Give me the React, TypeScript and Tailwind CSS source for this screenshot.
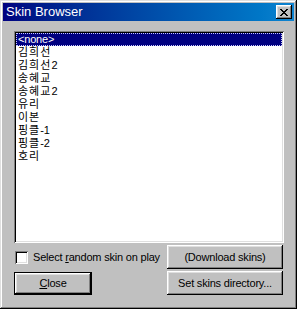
const skins = [
  "<none>",
  "김희선",
  "김희선2",
  "송혜교",
  "송혜교2",
  "유리",
  "이본",
  "핑클-1",
  "핑클-2",
  "호리",
];

const raised =
  "shadow-[inset_-1px_-1px_#000000,inset_1px_1px_#ffffff,inset_-2px_-2px_#808080,inset_2px_2px_#dfdfdf]";
const sunken =
  "shadow-[inset_1px_1px_#808080,inset_-1px_-1px_#ffffff,inset_2px_2px_#000000,inset_-2px_-2px_#dfdfdf]";

// hangul runs get wider spacing, like the bitmap Gulim in the original
function SkinName({ name }: { name: string }) {
  const parts = name.split(/([\uAC00-\uD7A3]+)/).filter(Boolean);
  return (
    <>
      {parts.map((p, i) =>
        /[\uAC00-\uD7A3]/.test(p) ? (
          <span key={i} className="tracking-[1px]">
            {p}
          </span>
        ) : (
          <span key={i}>{p}</span>
        )
      )}
    </>
  );
}

function App() {
  return (
    <div
      className="h-[309px] w-[297px] bg-[#c0c0c0] p-[3px] text-[11px] tracking-[-0.2px] text-black shadow-[inset_-1px_-1px_#000000,inset_1px_1px_#dfdfdf,inset_-2px_-2px_#808080,inset_2px_2px_#ffffff]"
      style={{ fontFamily: '"Liberation Sans", "Noto Sans CJK KR", sans-serif' }}
    >
      <div className="flex h-[18px] items-center justify-between bg-gradient-to-r from-[#000080] to-[#1084d0] pl-[3px] pr-[2px]">
        <span className="text-[13px] tracking-normal text-white">Skin Browser</span>
        <div
          className={`flex h-[14px] w-[16px] items-center justify-center bg-[#c0c0c0] ${raised}`}
        >
          <svg width="8" height="7" viewBox="0 0 8 7">
            <path d="M0 0h2v1h1v1h2V1h1V0h2v1H7v1H6v1H5v1h1v1h1v1h1v1H6V6H5V5H3v1H2v1H0V6h1V5h1V4h1V3H2V2H1V1H0z" fill="#000" />
          </svg>
        </div>
      </div>

      <div className="flex flex-col pl-[11px] pr-[10px] pt-[10px]">
        <div className={`h-[212px] w-[270px] bg-white p-[2px] ${sunken}`}>
          {skins.map((s, i) => (
            <div
              key={s}
              className={
                i === 0
                  ? "flex h-[13px] items-center border border-dotted border-[#c8c8ff] bg-[#000080] pl-[1px] text-white"
                  : "flex h-[13px] items-center pl-[2px]"
              }
            >
              <SkinName name={s} />
            </div>
          ))}
        </div>

        <div className="mt-[2px] flex h-[24px] items-center">
          <div className={`ml-[1px] h-[13px] w-[13px] bg-white ${sunken}`} />
          <span className="ml-[5px]">
            Select <span className="underline">r</span>andom skin on play
          </span>
          <button
            className={`ml-auto mr-[1px] h-[24px] w-[116px] bg-[#c0c0c0] ${raised}`}
          >
            (Download skins)
          </button>
        </div>

        <div className="mt-[2px] flex h-[24px] items-start">
          <button className="mt-[1px] h-[23px] w-[78px] border border-black bg-[#c0c0c0] shadow-[inset_-1px_-1px_#000000,inset_1px_1px_#ffffff,inset_-2px_-2px_#808080,inset_2px_2px_#dfdfdf]">
            <span className="underline">C</span>lose
          </button>
          <button
            className={`ml-auto mr-[1px] h-[24px] w-[116px] bg-[#c0c0c0] ${raised}`}
          >
            Set skins directory...
          </button>
        </div>
      </div>
    </div>
  );
}

export default App;
